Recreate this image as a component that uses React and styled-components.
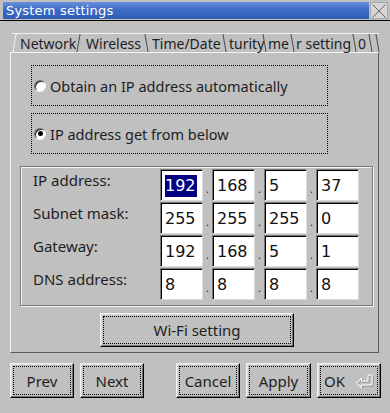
import React from "react";
import styled, { createGlobalStyle, css } from "styled-components";

const Global = createGlobalStyle`
  html, body { margin: 0; padding: 0; background: #c0c0c0; }
  body { font-family: "Noto Sans", "DejaVu Sans", sans-serif; color: #1e1e1e; }
  * { box-sizing: border-box; }
`;

const Window = styled.div`
  width: 390px;
  height: 413px;
  background: #c0c0c0;
  display: flex;
  flex-direction: column;
  overflow: hidden;
`;

const TitleBar = styled.div`
  display: flex;
  height: 21px;
  padding: 2px 2px 1px 3px;
  gap: 1px;
  border-bottom: 1px solid #000;
`;

const Caption = styled.div`
  flex: 1;
  display: flex;
  align-items: center;
  padding-left: 3px;
  background: linear-gradient(#6790dc, #3d6cc4 45%, #2f5db6);
  color: #fff;
  font-family: "DejaVu Sans", sans-serif;
  font-size: 13px;
  letter-spacing: 0.2px;
`;

const CloseBox = styled.div`
  width: 18px;
  height: 17px;
  background: #d6d6d6;
  border: 1px solid #a8a8a8;
  display: flex;
  align-items: center;
  justify-content: center;
`;

const Body = styled.div`
  padding-top: 12px;
  display: flex;
  flex-direction: column;
`;

const TabBar = styled.div`
  display: flex;
  height: 19px;
  padding-left: 12px;
  position: relative;
  z-index: 1;
`;

const slash = (dir, color) => css`
  content: "";
  position: absolute;
  top: 0;
  width: 1px;
  height: 100%;
  background: ${color};
  transform: skewX(${dir === "/" ? -10 : 10}deg);
`;

const Tab = styled.div`
  position: relative;
  width: ${(p) => p.$w}px;
  height: 19px;
  padding-left: ${(p) => p.$pl}px;
  padding-top: 1px;
  display: flex;
  align-items: center;
  font-size: 14px;
  white-space: nowrap;
  border-top: 1px solid #f4f4f4;
  background: #c0c0c0;
  ${(p) =>
    p.$first &&
    css`
      &::before {
        ${slash("/", "#f4f4f4")};
        left: 2px;
      }
    `}
  &::after {
    ${(p) => slash(p.$rd, "#4a4a4a")};
    right: 1px;
    z-index: 2;
  }
`;

const TabText = styled.span`
  overflow: hidden;
  display: block;
  max-width: 100%;
`;

const Panel = styled.div`
  margin: 0 11px 0 10px;
  height: 301px;
  border-top: 1px solid #f4f4f4;
  border-left: 1px solid #f4f4f4;
  border-right: 1px solid #5a5a5a;
  border-bottom: 1px solid #5a5a5a;
  padding: 12px 4px 5px 9px;
  display: flex;
  flex-direction: column;
`;

const RadioBox = styled.label`
  margin-left: 11px;
  margin-bottom: ${(p) => p.$mb}px;
  width: 297px;
  height: 41px;
  border: 1px dotted #000;
  display: flex;
  align-items: center;
  gap: 4px;
  padding-left: 2px;
  font-size: 14.5px;
`;

const RadioCircle = styled.span`
  width: 12px;
  height: 12px;
  border-radius: 50%;
  background: #fff;
  border: 1px solid;
  border-color: #6a6a6a #f4f4f4 #f4f4f4 #6a6a6a;
  box-shadow: inset 1px 1px 0 #202020;
  display: flex;
  align-items: center;
  justify-content: center;
  &::after {
    content: "";
    width: 5px;
    height: 5px;
    border-radius: 50%;
    background: ${(p) => (p.$on ? "#000" : "transparent")};
  }
`;

const GroupBox = styled.div`
  height: 140px;
  margin-bottom: 7px;
  border: 1px solid #7a7a7a;
  box-shadow: inset 1px 1px 0 #f4f4f4, 1px 1px 0 #f4f4f4;
  margin-right: 1px;
  padding: 2px 0 4px 12px;
  display: grid;
  grid-template-columns: 127px auto;
  grid-auto-rows: 32px;
  row-gap: 1px;
`;

const FieldLabel = styled.div`
  align-self: start;
  margin-top: 2px;
  line-height: 18px;
  font-size: 15px;
`;

const IpRow = styled.div`
  display: flex;
  align-items: stretch;
`;

const Field = styled.div`
  width: 43px;
  background: #fff;
  border-top: 1px solid #7a7a7a;
  border-left: 1px solid #7a7a7a;
  border-right: 1px solid #dcdcdc;
  border-bottom: 1px solid #dcdcdc;
  box-shadow: inset 1px 1px 0 #000;
  display: flex;
  align-items: center;
  padding-left: 4px;
  padding-top: 1px;
  font-family: "DejaVu Sans", sans-serif;
  font-size: 16px;
  color: #111;
`;

const Selected = styled.span`
  background: #000080;
  color: #fff;
  line-height: 22px;
  padding: 0 1px 0 0;
`;

const Dot = styled.span`
  width: 9px;
  display: flex;
  align-items: center;
  justify-content: center;
  padding-top: 6px;
  font-size: 11px;
`;

const BevelButton = styled.button`
  position: relative;
  width: ${(p) => p.$w}px;
  height: ${(p) => p.$h}px;
  margin-left: ${(p) => p.$ml || 0}px;
  background: #c0c0c0;
  border: 1px solid;
  border-color: #f4f4f4 #000 #000 #f4f4f4;
  box-shadow: inset -1px -1px 0 #7a7a7a, inset 1px 1px 0 #dedede;
  font-family: "Noto Sans", sans-serif;
  font-size: 15px;
  color: #1e1e1e;
  padding: 0;
  display: flex;
  align-items: center;
  justify-content: center;
  gap: 10px;
  &::before {
    content: "";
    position: absolute;
    inset: 2px;
    border: 1px dotted #000;
  }
`;

const ButtonRow = styled.div`
  display: flex;
  margin-top: 10px;
  padding-left: 10px;
  gap: 6px;
`;

const Spacer = styled.div`
  width: 20px;
`;

const ipRows = [
  ["IP address:", ["192", "168", "5", "37"]],
  ["Subnet mask:", ["255", "255", "255", "0"]],
  ["Gateway:", ["192", "168", "5", "1"]],
  ["DNS address:", ["8", "8", "8", "8"]],
];

const tabs = [
  { t: "Network", w: 68, pl: 8, rd: "/", first: true },
  { t: "Wireless", w: 68, pl: 6, rd: "\\" },
  { t: "Time/Date", w: 78, pl: 4, rd: "\\" },
  { t: "turity", w: 40, pl: 3, rd: "\\" },
  { t: "me", w: 28, pl: 2, rd: "\\" },
  { t: "r setting", w: 62, pl: 2, rd: "\\" },
  { t: "0", w: 16, pl: 2, rd: "\\" },
  { t: "", w: 7, pl: 0, rd: "\\" },
];

function ReturnIcon() {
  return (
    <svg width="19" height="15" viewBox="0 0 19 15">
      <path d="M2 10.5 L7 5.5 L7 8.5 L13.5 8.5 L13.5 2.5 L17.5 2.5 L17.5 12.5 L7 12.5 L7 15" fill="none" stroke="#8a8a8a" strokeWidth="1" transform="translate(0.6 0.6)" />
      <path d="M1.5 10 L6.5 5 L6.5 8 L13 8 L13 2 L17 2 L17 12 L6.5 12 L6.5 14.5 Z" fill="none" stroke="#fff" strokeWidth="1" />
    </svg>
  );
}

export default function App() {
  return (
    <>
      <Global />
      <Window>
        <TitleBar>
          <Caption>System settings</Caption>
          <CloseBox>
            <svg width="14" height="14" viewBox="0 0 14 14">
              <path d="M0.5 0.5 L13.5 13.5 M13.5 0.5 L0.5 13.5" stroke="#4a4a4a" strokeWidth="0.8" />
            </svg>
          </CloseBox>
        </TitleBar>
        <Body>
          <TabBar>
            {tabs.map((tb, i) => (
              <Tab key={i} $w={tb.w} $pl={tb.pl} $rd={tb.rd} $first={tb.first}>
                <TabText>{tb.t}</TabText>
              </Tab>
            ))}
          </TabBar>
          <Panel>
            <RadioBox $mb={7}>
              <RadioCircle />
              Obtain an IP address automatically
            </RadioBox>
            <RadioBox $mb={12}>
              <RadioCircle $on />
              IP address get from below
            </RadioBox>
            <GroupBox>
              {ipRows.map(([label, vals], r) => (
                <React.Fragment key={label}>
                  <FieldLabel>{label}</FieldLabel>
                  <IpRow>
                    {vals.map((v, i) => (
                      <React.Fragment key={i}>
                        {i > 0 && <Dot>.</Dot>}
                        <Field>{r === 0 && i === 0 ? <Selected>{v}</Selected> : v}</Field>
                      </React.Fragment>
                    ))}
                  </IpRow>
                </React.Fragment>
              ))}
            </GroupBox>
            <BevelButton $w={194} $h={34} $ml={80}>Wi-Fi setting</BevelButton>
          </Panel>
          <ButtonRow>
            <BevelButton $w={64} $h={35}>Prev</BevelButton>
            <BevelButton $w={64} $h={35}>Next</BevelButton>
            <Spacer />
            <BevelButton $w={64} $h={35}>Cancel</BevelButton>
            <BevelButton $w={65} $h={35}>Apply</BevelButton>
            <BevelButton $w={64} $h={35}>
              OK <ReturnIcon />
            </BevelButton>
          </ButtonRow>
        </Body>
      </Window>
    </>
  );
}
